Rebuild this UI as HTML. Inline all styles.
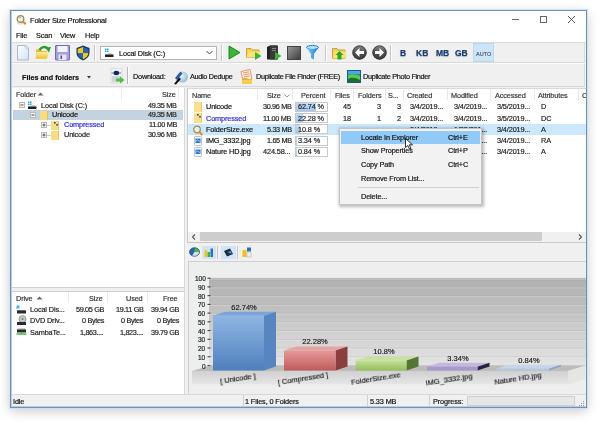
<!DOCTYPE html><html><head><meta charset="utf-8"><style>
html,body{margin:0;padding:0;width:600px;height:422px;overflow:hidden;background:#fff;position:relative}
.t{position:absolute;line-height:10px;white-space:nowrap;font-family:"Liberation Sans",sans-serif;will-change:transform;-webkit-text-stroke-width:0.18px}
.r{position:absolute;display:block}
</style></head><body>
<div class="r" style="left:10px;top:10px;width:577px;height:398px;background:#f0f0f0;box-shadow:0 0 0 1px rgba(200,225,248,0.8),0 3px 11px rgba(0,0,0,0.22);border:0"></div>
<div class="r" style="left:10px;top:10px;width:577px;height:398px;border:1px solid #7390b2;box-sizing:border-box;z-index:50;background:transparent"></div>
<div class="r" style="left:11px;top:11px;width:575px;height:396px;border:1px solid #b8cde4;border-top:0;border-right:0;box-sizing:border-box;z-index:50;background:transparent"></div>
<div class="r" style="left:11px;top:11px;width:575px;height:31px;background:#fff"></div>
<svg class="r" style="left:15px;top:14px" width="12" height="12" viewBox="0 0 12 12"><path d="M2 7 H8 V10.5 H2 Z" fill="#e8d8a8" opacity="0.8"/><circle cx="5.5" cy="5" r="3.3" fill="#eeeedd" stroke="#8c8c68" stroke-width="1.3"/><path d="M6 3.5 Q5 3 4 4" stroke="#9a9a80" stroke-width="0.7" fill="none"/><line x1="8" y1="7.5" x2="10.8" y2="10.3" stroke="#d08a40" stroke-width="2"/></svg>
<div class="t" style="left:30px;top:15.65px;font-size:7.5px;color:#111;font-weight:normal;letter-spacing:-0.2px;">Folder Size Professional</div>
<div class="r" style="left:512px;top:19px;width:7px;height:1px;background:#666"></div>
<div class="r" style="left:540px;top:16px;width:7px;height:7px;border:1px solid #666;box-sizing:border-box"></div>
<svg class="r" style="left:567px;top:15px" width="9" height="9" viewBox="0 0 9 9"><path d="M1 1 L8 8 M8 1 L1 8" stroke="#444" stroke-width="0.9"/></svg>
<div class="t" style="left:15.5px;top:31.32px;font-size:7.3px;color:#111;font-weight:normal;letter-spacing:-0.12px;">File</div>
<div class="t" style="left:36px;top:31.32px;font-size:7.3px;color:#111;font-weight:normal;letter-spacing:-0.12px;">Scan</div>
<div class="t" style="left:60px;top:31.32px;font-size:7.3px;color:#111;font-weight:normal;letter-spacing:-0.12px;">View</div>
<div class="t" style="left:84.5px;top:31.32px;font-size:7.3px;color:#111;font-weight:normal;letter-spacing:-0.12px;">Help</div>
<div class="r" style="left:11px;top:42px;width:575px;height:1px;background:#dadada"></div>
<div class="r" style="left:11px;top:43px;width:574px;height:20px;background:#f0f0f0"></div>
<div class="r" style="left:11px;top:62px;width:574px;height:1px;background:#d9d9d9"></div>
<div class="r" style="left:11px;top:63px;width:574px;height:1px;background:#fbfbfb"></div>
<div class="r" style="left:584px;top:43px;width:1px;height:20px;background:#dcdcdc"></div>
<svg class="r" style="left:16px;top:45px" width="13" height="16" viewBox="0 0 13 16"><defs><linearGradient id="gn" x1="0" y1="0" x2="1" y2="1"><stop offset="0" stop-color="#ffffff"/><stop offset="1" stop-color="#d4e2f6"/></linearGradient></defs><path d="M1.5 0.5 H8 Q12.5 0.5 12.5 5 V15 H1.5 Z" fill="url(#gn)" stroke="#a9b6d6"/><path d="M8 0.5 Q9.5 3.5 12.5 5" fill="none" stroke="#b8c4e0"/></svg>
<svg class="r" style="left:35px;top:45px" width="17" height="15" viewBox="0 0 17 15"><defs><linearGradient id="go" x1="0" y1="0" x2="0" y2="1"><stop offset="0" stop-color="#fdf0a0"/><stop offset="1" stop-color="#f0c030"/></linearGradient></defs><path d="M1 4.5 H5.5 L7 6 H12 V13.5 H1 Z" fill="#e8b830"/><path d="M1.5 7 H14 L12 13.5 H0.5 Z" fill="url(#go)"/><path d="M4.5 5 Q8 0 13 3.5" stroke="#22a030" stroke-width="2.4" fill="none"/><path d="M10.5 3 L16 1.8 L14 7.5 Z" fill="#22a030"/></svg>
<svg class="r" style="left:55px;top:45px" width="15" height="16" viewBox="0 0 15 16"><rect x="0.5" y="0.5" width="14" height="14.5" rx="0.5" fill="#a69fdc" stroke="#7068b8"/><rect x="2.5" y="1" width="10" height="6" fill="#f4f4fc"/><rect x="3.5" y="9.5" width="8" height="5.5" fill="#e4e2f4"/><rect x="5.5" y="10.5" width="1.5" height="3.5" fill="#5048a0"/></svg>
<svg class="r" style="left:76px;top:45px" width="14" height="16" viewBox="0 0 14 16"><path d="M7 0.5 L13.5 3 V8 Q13.5 13 7 15.5 Q0.5 13 0.5 8 V3 Z" fill="#17356a"/><path d="M7 2 L12.3 3.9 V8 H7 Z M7 8 V14.2 Q2 12.3 1.7 8 Z" fill="#2a62b0"/><path d="M7 2 V8 H1.7 V3.9 Z M7 8 H12.3 Q12 12.3 7 14.2 Z" fill="#f0c81e"/></svg>
<div class="r" style="left:94px;top:45px;width:1px;height:16px;background:#c8c8c8"></div>
<div class="r" style="left:95px;top:45px;width:1px;height:16px;background:#fff"></div>
<div class="r" style="left:100px;top:46px;width:117px;height:14px;background:#fff;border:1px solid #b4b4b4;box-sizing:border-box"></div>
<svg class="r" style="left:104px;top:48px" width="11" height="10" viewBox="0 0 11 10"><rect x="1" y="0.5" width="1.5" height="1.5" fill="#29a8e8"/><rect x="3" y="0.5" width="1.5" height="1.5" fill="#29a8e8"/><rect x="1" y="2.5" width="1.5" height="1.5" fill="#29a8e8"/><rect x="3" y="2.5" width="1.5" height="1.5" fill="#29a8e8"/><path d="M5 5.5 H8 L9.5 6.5 H1 Z" fill="#aaa"/><rect x="1" y="6.5" width="8.5" height="2.5" fill="#222"/></svg>
<div class="t" style="left:119px;top:48.82px;font-size:7.3px;color:#111;font-weight:normal;letter-spacing:-0.12px;">Local Disk (C:)</div>
<svg class="r" style="left:206px;top:50px" width="7" height="5" viewBox="0 0 7 5"><path d="M0.5 1 L3.5 4 L6.5 1" stroke="#444" fill="none" stroke-width="1"/></svg>
<div class="r" style="left:221px;top:45px;width:1px;height:16px;background:#c8c8c8"></div>
<div class="r" style="left:222px;top:45px;width:1px;height:16px;background:#fff"></div>
<svg class="r" style="left:228px;top:45px" width="13" height="15" viewBox="0 0 13 15"><path d="M1 1 L12 7.5 L1 14 Z" fill="#3cb43c" stroke="#1f8a1f"/></svg>
<svg class="r" style="left:246px;top:45px" width="16" height="15" viewBox="0 0 16 15"><path d="M0.5 3.5 H5 L6.5 5 H13 V12.5 H0.5 Z" fill="#f2cf55" stroke="#c9a430"/><path d="M2.5 6.5 H15 L13 12.5 H0.5 Z" fill="#fbe27a"/><path d="M9 7 L15.5 11 L9 15 Z" fill="#3cb43c"/></svg>
<svg class="r" style="left:266px;top:45px" width="16" height="15" viewBox="0 0 16 15"><path d="M1 2 L4 0.5 H11 V14.5 H1 Z" fill="#222"/><rect x="4" y="0.5" width="8" height="14" fill="#3a3a3a"/><rect x="6" y="3" width="4" height="1" fill="#888"/><rect x="6" y="5" width="4" height="1" fill="#888"/><path d="M9 7 L15.5 11 L9 15 Z" fill="#3cb43c"/></svg>
<svg class="r" style="left:287px;top:46px" width="14" height="14" viewBox="0 0 14 14"><defs><linearGradient id="gs" x1="0" y1="0" x2="1" y2="1"><stop offset="0" stop-color="#9a9a9a"/><stop offset="1" stop-color="#3c3c3c"/></linearGradient></defs><rect x="0.5" y="0.5" width="13" height="13" fill="url(#gs)" stroke="#444"/></svg>
<svg class="r" style="left:306px;top:45px" width="13" height="15" viewBox="0 0 13 15"><defs><linearGradient id="gf" x1="0" y1="0" x2="1" y2="0"><stop offset="0" stop-color="#7fd0ff"/><stop offset="1" stop-color="#1b78d0"/></linearGradient></defs><ellipse cx="6.5" cy="2.5" rx="6" ry="2" fill="#b8e4ff" stroke="#1b78d0"/><path d="M0.5 2.5 Q6.5 6 12.5 2.5 L8 9 V14.5 L5 13 V9 Z" fill="url(#gf)"/></svg>
<div class="r" style="left:325px;top:45px;width:1px;height:16px;background:#c8c8c8"></div>
<div class="r" style="left:326px;top:45px;width:1px;height:16px;background:#fff"></div>
<svg class="r" style="left:332px;top:45px" width="15" height="15" viewBox="0 0 15 15"><path d="M0.5 3.5 H5 L6.5 5 H13 V13.5 H0.5 Z" fill="#f2cf55" stroke="#c9a430"/><path d="M2.5 6.5 H14.5 L13 13.5 H0.5 Z" fill="#fbe27a"/><path d="M7.5 6 L11.5 10 H9.5 V14.5 H5.5 V10 H3.5 Z" fill="#2aa52a"/></svg>
<svg class="r" style="left:352.0px;top:45px" width="15" height="15" viewBox="0 0 15 15"><defs><linearGradient id="gb359" x1="0" y1="0" x2="0" y2="1"><stop offset="0" stop-color="#8a8a8a"/><stop offset="0.5" stop-color="#505050"/><stop offset="1" stop-color="#3a3a3a"/></linearGradient></defs><circle cx="7.5" cy="7.5" r="7.2" fill="url(#gb359)"/><circle cx="7.5" cy="7.5" r="6.6" fill="none" stroke="#2a2a2a" stroke-width="0.6"/><path d="M3 7.5 L7.5 3 V6 H12 V9 H7.5 V12 Z" fill="#fff"/></svg>
<svg class="r" style="left:372.0px;top:45px" width="15" height="15" viewBox="0 0 15 15"><defs><linearGradient id="gb379" x1="0" y1="0" x2="0" y2="1"><stop offset="0" stop-color="#8a8a8a"/><stop offset="0.5" stop-color="#505050"/><stop offset="1" stop-color="#3a3a3a"/></linearGradient></defs><circle cx="7.5" cy="7.5" r="7.2" fill="url(#gb379)"/><circle cx="7.5" cy="7.5" r="6.6" fill="none" stroke="#2a2a2a" stroke-width="0.6"/><path d="M12 7.5 L7.5 3 V6 H3 V9 H7.5 V12 Z" fill="#fff"/></svg>
<div class="r" style="left:390px;top:45px;width:1px;height:16px;background:#c8c8c8"></div>
<div class="r" style="left:391px;top:45px;width:1px;height:16px;background:#fff"></div>
<div class="t" style="left:400px;top:47.70px;font-size:8.5px;color:#1e3d6e;font-weight:bold;letter-spacing:0px;text-shadow:0 1px 1px rgba(30,60,110,0.35)">B</div>
<div class="t" style="left:416px;top:47.70px;font-size:8.5px;color:#1e3d6e;font-weight:bold;letter-spacing:0px;text-shadow:0 1px 1px rgba(30,60,110,0.35)">KB</div>
<div class="t" style="left:435.5px;top:47.70px;font-size:8.5px;color:#1e3d6e;font-weight:bold;letter-spacing:0px;text-shadow:0 1px 1px rgba(30,60,110,0.35)">MB</div>
<div class="t" style="left:455px;top:47.70px;font-size:8.5px;color:#1e3d6e;font-weight:bold;letter-spacing:0px;text-shadow:0 1px 1px rgba(30,60,110,0.35)">GB</div>
<div class="r" style="left:473px;top:43px;width:21px;height:19px;background:#cde4f7;border:1px solid #b8d8f2;box-sizing:border-box"></div>
<div class="t" style="left:475.5px;top:49.04px;font-size:5.5px;color:#4a5a70;font-weight:normal;letter-spacing:0px;">AUTO</div>
<div class="r" style="left:11px;top:64px;width:574px;height:23px;background:#f0f0f0"></div>
<div class="r" style="left:11px;top:86px;width:574px;height:1px;background:#d9d9d9"></div>
<div class="r" style="left:584px;top:64px;width:1px;height:22px;background:#dcdcdc"></div>
<div class="t" style="left:22px;top:72.56px;font-size:7.2px;color:#111;font-weight:bold;letter-spacing:0px;">Files and folders</div>
<svg class="r" style="left:87px;top:76px" width="4" height="3" viewBox="0 0 4 3"><path d="M0 0 H4 L2 2.5 Z" fill="#333"/></svg>
<svg class="r" style="left:110px;top:68px" width="15" height="16" viewBox="0 0 15 16"><rect x="1" y="0.5" width="11" height="14.5" fill="#f2f4f8" stroke="#d4d8e0" stroke-width="0.8"/><rect x="2" y="8" width="9" height="6" fill="#cdd4de"/><path d="M1.5 5 H3.5 M9 5 H11" stroke="#555" stroke-width="0.8"/><ellipse cx="6.3" cy="5" rx="2.8" ry="2.2" fill="#12286a"/><path d="M6 10.5 H10 V8.5 L14.5 12 L10 15.5 V13.5 H6 Z" fill="#52c040"/></svg>
<div class="r" style="left:127px;top:67px;width:1px;height:17px;background:#b8b8b8"></div>
<div class="r" style="left:128px;top:67px;width:1px;height:17px;background:#fff"></div>
<div class="t" style="left:133px;top:72.02px;font-size:7.3px;color:#111;font-weight:normal;letter-spacing:-0.22px;">Download:</div>
<svg class="r" style="left:173px;top:69px" width="15" height="16" viewBox="0 0 15 16"><defs><radialGradient id="ga" cx="0.4" cy="0.4" r="0.7"><stop offset="0" stop-color="#eef6fb"/><stop offset="1" stop-color="#8ab4d4"/></radialGradient></defs><circle cx="9.5" cy="8" r="5.5" fill="url(#ga)"/><path d="M2 9 L7.5 2.5 L9.5 4.5 L4 11 Z" fill="#2d5ca8"/><path d="M1 15 L6 8.5 L8 10 L3 15.5 Z" fill="#111"/></svg>
<div class="t" style="left:190px;top:72.02px;font-size:7.3px;color:#111;font-weight:normal;letter-spacing:-0.32px;">Audio Dedupe</div>
<svg class="r" style="left:239px;top:69px" width="15" height="16" viewBox="0 0 15 16"><path d="M2 2.5 L11 0.5 L13 10 L4 12 Z" fill="#fbf3ea" stroke="#e08040" stroke-width="0.8"/><path d="M4 4 L10 2.8 M4.5 6 L10.5 4.8 M5 8 L11 6.8" stroke="#e06a30" stroke-width="0.7"/><path d="M3 9 H8 L9 10 H13 V15 H3 Z" fill="#f3b030"/><path d="M3 11 H13 V15 H3 Z" fill="#f8cc50"/></svg>
<div class="t" style="left:256px;top:72.02px;font-size:7.3px;color:#111;font-weight:normal;letter-spacing:-0.33999999999999997px;">Duplicate File Finder (FREE)</div>
<svg class="r" style="left:347px;top:70px" width="14" height="13" viewBox="0 0 14 13"><rect x="0.5" y="0.5" width="13" height="12" fill="#2a9a4a" stroke="#1a5a8a"/><path d="M1 5 Q7 3 13 6 V12 H1 Z" fill="#5ac85a"/><path d="M1 9 Q6 6 13 10 V12 H1 Z" fill="#1d6e2a"/><rect x="1" y="1" width="12" height="3" fill="#4aa8e8"/></svg>
<div class="t" style="left:363px;top:72.02px;font-size:7.3px;color:#111;font-weight:normal;letter-spacing:-0.32px;">Duplicate Photo Finder</div>
<div class="r" style="left:11px;top:88px;width:173px;height:199px;background:#fff"></div>
<div class="r" style="left:11px;top:287px;width:174px;height:1px;background:#d0d0d0"></div>
<div class="r" style="left:11px;top:291px;width:173px;height:103px;background:#fff"></div>
<div class="r" style="left:11px;top:291px;width:174px;height:1px;background:#d0d0d0"></div>
<div class="r" style="left:184px;top:88px;width:1px;height:306px;background:#d8d8d8"></div>
<div class="r" style="left:187px;top:88px;width:399px;height:154px;background:#fff;border-left:1px solid #c8c8c8;border-top:1px solid #d8d8d8;box-sizing:border-box"></div>
<div class="r" style="left:187px;top:242px;width:399px;height:1px;background:#c8c8c8"></div>
<div class="t" style="left:16px;top:89.82px;font-size:7.3px;color:#333;font-weight:normal;letter-spacing:-0.12px;">Folder</div>
<svg class="r" style="left:37px;top:92px" width="7" height="4" viewBox="0 0 7 4"><path d="M0.5 3.5 L3.5 0.5 L6.5 3.5 Z" fill="#666"/></svg>
<div class="r" style="left:121px;top:89px;width:1px;height:11px;background:#eaeaea"></div>
<div class="r" style="left:178px;top:89px;width:1px;height:11px;background:#eaeaea"></div>
<div class="t" style="right:424.3px;top:89.82px;font-size:7.3px;color:#333;font-weight:normal;letter-spacing:-0.12px;">Size</div>
<div class="r" style="left:13px;top:110px;width:170px;height:10px;background:#c4d3e0"></div>
<svg class="r" style="left:19px;top:102px" width="6" height="6" viewBox="0 0 6 6"><rect x="0.5" y="0.5" width="5" height="5" fill="#f8f8f8" stroke="#b8b8b8"/><path d="M1.5 3 H4.5" stroke="#444"/></svg>
<svg class="r" style="left:27px;top:101px" width="10" height="8" viewBox="0 0 10 8"><rect x="1" y="0.5" width="1.5" height="1.5" fill="#29a8e8"/><rect x="3" y="0.5" width="1.5" height="1.5" fill="#29a8e8"/><rect x="1" y="2.5" width="1.5" height="1.5" fill="#29a8e8"/><rect x="3" y="2.5" width="1.5" height="1.5" fill="#29a8e8"/><path d="M5 4.5 H8 L9.5 5.5 H1 Z" fill="#aaa"/><rect x="1" y="5.5" width="8.5" height="2.5" fill="#222"/></svg>
<div class="t" style="left:41.3px;top:100.52px;font-size:7.3px;color:#222;font-weight:normal;letter-spacing:-0.12px;">Local Disk (C:)</div>
<div class="t" style="right:423.5px;top:100.52px;font-size:7.3px;color:#222;font-weight:normal;letter-spacing:-0.33999999999999997px;">49.35 MB</div>
<svg class="r" style="left:30px;top:112px" width="6" height="6" viewBox="0 0 6 6"><rect x="0.5" y="0.5" width="5" height="5" fill="#f8f8f8" stroke="#b8b8b8"/><path d="M1.5 3 H4.5" stroke="#444"/></svg>
<div class="r" style="left:40px;top:111px;width:8px;height:9px;background:#f8dc84;border-right:1px solid #e6c066;box-sizing:border-box"></div>
<div class="t" style="left:52.3px;top:110.32px;font-size:7.3px;color:#111;font-weight:normal;letter-spacing:-0.12px;">Unicode</div>
<div class="t" style="right:423.5px;top:110.32px;font-size:7.3px;color:#222;font-weight:normal;letter-spacing:-0.33999999999999997px;">49.35 MB</div>
<svg class="r" style="left:41px;top:122px" width="6" height="6" viewBox="0 0 6 6"><rect x="0.5" y="0.5" width="5" height="5" fill="#f8f8f8" stroke="#b8b8b8"/><path d="M1.5 3 H4.5" stroke="#444"/><path d="M3 1.5 V4.5" stroke="#555"/></svg>
<div class="r" style="left:51px;top:121px;width:8px;height:9px;background:#f8dc84;border-right:1px solid #e6c066;box-sizing:border-box"></div>
<svg class="r" style="left:53px;top:121px" width="6" height="6" viewBox="0 0 6 6"><rect x="1" y="1" width="1.6" height="1.6" fill="#1a4a90"/><rect x="3.2" y="3" width="1.6" height="1.6" fill="#1a4a90"/></svg>
<div class="t" style="left:64px;top:120.42px;font-size:7.3px;color:#2a2adf;font-weight:normal;letter-spacing:-0.12px;">Compressed</div>
<div class="t" style="right:423.5px;top:120.42px;font-size:7.3px;color:#222;font-weight:normal;letter-spacing:-0.33999999999999997px;">11.00 MB</div>
<svg class="r" style="left:41px;top:132px" width="6" height="6" viewBox="0 0 6 6"><rect x="0.5" y="0.5" width="5" height="5" fill="#f8f8f8" stroke="#b8b8b8"/><path d="M1.5 3 H4.5" stroke="#444"/><path d="M3 1.5 V4.5" stroke="#555"/></svg>
<div class="r" style="left:51px;top:131px;width:8px;height:9px;background:#f8dc84;border-right:1px solid #e6c066;box-sizing:border-box"></div>
<div class="t" style="left:64px;top:130.42px;font-size:7.3px;color:#222;font-weight:normal;letter-spacing:-0.12px;">Unicode</div>
<div class="t" style="right:423.5px;top:130.42px;font-size:7.3px;color:#222;font-weight:normal;letter-spacing:-0.33999999999999997px;">30.96 MB</div>
<div class="r" style="left:47px;top:125px;width:4px;height:1px;background:#d0d0d0"></div>
<div class="r" style="left:47px;top:135px;width:4px;height:1px;background:#d0d0d0"></div>
<div class="r" style="left:36px;top:108px;width:1px;height:2px;background:#d0d0d0"></div>
<div class="t" style="left:16.2px;top:293.82px;font-size:7.3px;color:#333;font-weight:normal;letter-spacing:-0.12px;">Drive</div>
<svg class="r" style="left:36px;top:296px" width="7" height="4" viewBox="0 0 7 4"><path d="M0.5 3.5 L3.5 0.5 L6.5 3.5 Z" fill="#666"/></svg>
<div class="r" style="left:67.5px;top:292px;width:1px;height:11px;background:#eaeaea"></div>
<div class="r" style="left:106.5px;top:292px;width:1px;height:11px;background:#eaeaea"></div>
<div class="r" style="left:146.5px;top:292px;width:1px;height:11px;background:#eaeaea"></div>
<div class="t" style="right:497.1px;top:293.82px;font-size:7.3px;color:#333;font-weight:normal;letter-spacing:-0.12px;">Size</div>
<div class="t" style="right:457.7px;top:293.82px;font-size:7.3px;color:#333;font-weight:normal;letter-spacing:-0.12px;">Used</div>
<div class="t" style="right:422px;top:293.82px;font-size:7.3px;color:#333;font-weight:normal;letter-spacing:-0.12px;">Free</div>
<div class="t" style="left:29.7px;top:305.02px;font-size:7.3px;color:#222;font-weight:normal;letter-spacing:-0.12px;">Local Dis...</div>
<div class="t" style="right:496.3px;top:305.02px;font-size:7.3px;color:#222;font-weight:normal;letter-spacing:-0.33999999999999997px;">59.05 GB</div>
<div class="t" style="right:456.9px;top:305.02px;font-size:7.3px;color:#222;font-weight:normal;letter-spacing:-0.33999999999999997px;">19.11 GB</div>
<div class="t" style="right:421.2px;top:305.02px;font-size:7.3px;color:#222;font-weight:normal;letter-spacing:-0.33999999999999997px;">39.94 GB</div>
<div class="t" style="left:29.7px;top:316.27px;font-size:7.3px;color:#222;font-weight:normal;letter-spacing:-0.12px;">DVD Driv...</div>
<div class="t" style="right:496.3px;top:316.27px;font-size:7.3px;color:#222;font-weight:normal;letter-spacing:-0.33999999999999997px;">0 Bytes</div>
<div class="t" style="right:456.9px;top:316.27px;font-size:7.3px;color:#222;font-weight:normal;letter-spacing:-0.33999999999999997px;">0 Bytes</div>
<div class="t" style="right:421.2px;top:316.27px;font-size:7.3px;color:#222;font-weight:normal;letter-spacing:-0.33999999999999997px;">0 Bytes</div>
<div class="t" style="left:29.7px;top:327.52px;font-size:7.3px;color:#222;font-weight:normal;letter-spacing:-0.12px;">SambaTe...</div>
<div class="t" style="right:496.3px;top:327.52px;font-size:7.3px;color:#222;font-weight:normal;letter-spacing:-0.33999999999999997px;">1,863....</div>
<div class="t" style="right:456.9px;top:327.52px;font-size:7.3px;color:#222;font-weight:normal;letter-spacing:-0.33999999999999997px;">1,823....</div>
<div class="t" style="right:421.2px;top:327.52px;font-size:7.3px;color:#222;font-weight:normal;letter-spacing:-0.33999999999999997px;">39.79 GB</div>
<svg class="r" style="left:16px;top:305px" width="11" height="9" viewBox="0 0 11 9"><rect x="0.5" y="0.5" width="3" height="3" fill="#3cb8f0"/><path d="M2 5 H9 L10 6 H1 Z" fill="#999"/><rect x="1" y="5.5" width="9" height="3" fill="#2a2a2a"/></svg>
<svg class="r" style="left:16px;top:315px" width="11" height="11" viewBox="0 0 11 11"><circle cx="6.5" cy="4" r="3.5" fill="#c8c8c8" stroke="#888" stroke-width="0.8"/><circle cx="6.5" cy="4" r="1" fill="#777"/><path d="M1 7 H10 V10 H1 Z" fill="#2a2a2a"/></svg>
<svg class="r" style="left:16px;top:327px" width="11" height="9" viewBox="0 0 11 9"><path d="M2 1.5 H9 L10 2.5 H1 Z" fill="#999"/><rect x="1" y="2.5" width="9" height="3" fill="#2a2a2a"/><path d="M0.5 7 H10.5" stroke="#3cb43c" stroke-width="1.4"/><path d="M5.5 5.5 V7" stroke="#3cb43c" stroke-width="1"/></svg>
<div class="t" style="left:192px;top:91.32px;font-size:7.3px;color:#333;font-weight:normal;letter-spacing:-0.12px;">Name</div>
<div class="t" style="right:319.5px;top:91.32px;font-size:7.3px;color:#333;font-weight:normal;letter-spacing:-0.12px;">Size</div>
<div class="t" style="left:301px;top:91.32px;font-size:7.3px;color:#333;font-weight:normal;letter-spacing:-0.12px;">Percent</div>
<div class="t" style="right:250.5px;top:91.32px;font-size:7.3px;color:#333;font-weight:normal;letter-spacing:-0.12px;">Files</div>
<div class="t" style="right:219px;top:91.32px;font-size:7.3px;color:#333;font-weight:normal;letter-spacing:-0.12px;">Folders</div>
<div class="t" style="left:388px;top:91.32px;font-size:7.3px;color:#333;font-weight:normal;letter-spacing:-0.12px;">S...</div>
<div class="t" style="left:407px;top:91.32px;font-size:7.3px;color:#333;font-weight:normal;letter-spacing:-0.12px;">Created</div>
<div class="t" style="left:450.8px;top:91.32px;font-size:7.3px;color:#333;font-weight:normal;letter-spacing:-0.12px;">Modified</div>
<div class="t" style="left:494.7px;top:91.32px;font-size:7.3px;color:#333;font-weight:normal;letter-spacing:-0.12px;">Accessed</div>
<div class="t" style="left:538.3px;top:91.32px;font-size:7.3px;color:#333;font-weight:normal;letter-spacing:-0.12px;">Attributes</div>
<div class="t" style="left:581.5px;top:91.32px;font-size:7.3px;color:#333;font-weight:normal;letter-spacing:-0.12px;">C</div>
<svg class="r" style="left:284px;top:94px" width="6" height="4" viewBox="0 0 6 4"><path d="M0.5 0.5 L3 3 L5.5 0.5" stroke="#999" fill="none"/></svg>
<div class="r" style="left:257px;top:89px;width:1px;height:11px;background:#e8e8e8"></div>
<div class="r" style="left:292px;top:89px;width:1px;height:11px;background:#e8e8e8"></div>
<div class="r" style="left:329.5px;top:89px;width:1px;height:11px;background:#e8e8e8"></div>
<div class="r" style="left:353px;top:89px;width:1px;height:11px;background:#e8e8e8"></div>
<div class="r" style="left:384.5px;top:89px;width:1px;height:11px;background:#e8e8e8"></div>
<div class="r" style="left:403.3px;top:89px;width:1px;height:11px;background:#e8e8e8"></div>
<div class="r" style="left:446.7px;top:89px;width:1px;height:11px;background:#e8e8e8"></div>
<div class="r" style="left:490px;top:89px;width:1px;height:11px;background:#e8e8e8"></div>
<div class="r" style="left:534px;top:89px;width:1px;height:11px;background:#e8e8e8"></div>
<div class="r" style="left:578px;top:89px;width:1px;height:11px;background:#e8e8e8"></div>
<div class="r" style="left:188px;top:124px;width:398px;height:11px;background:#cce8ff"></div>
<div class="r" style="left:194px;top:102px;width:8px;height:10px;background:#f9e08e;border-right:1px solid #ecc870;box-sizing:border-box"></div>
<div class="t" style="left:206px;top:102.42px;font-size:7.3px;color:#111;font-weight:normal;letter-spacing:-0.12px;">Unicode</div>
<div class="t" style="right:308.7px;top:102.42px;font-size:7.3px;color:#222;font-weight:normal;letter-spacing:-0.33999999999999997px;">30.96 MB</div>
<div class="r" style="left:295px;top:102px;width:33px;height:10px;background:#fff;border:1px solid #c8c8c8;box-sizing:border-box"></div>
<div class="r" style="left:296px;top:103px;width:20px;height:8px;background:linear-gradient(#c0dcf6,#a4c8ee)"></div>
<div class="t" style="left:298px;top:102.42px;font-size:7.3px;color:#222;font-weight:normal;letter-spacing:-0.12px;">62.74 %</div>
<div class="t" style="right:249.5px;top:102.42px;font-size:7.3px;color:#222;font-weight:normal;letter-spacing:-0.12px;">45</div>
<div class="t" style="right:219px;top:102.42px;font-size:7.3px;color:#222;font-weight:normal;letter-spacing:-0.12px;">3</div>
<div class="t" style="right:199.2px;top:102.42px;font-size:7.3px;color:#222;font-weight:normal;letter-spacing:-0.12px;">3</div>
<div class="t" style="left:410px;top:102.42px;font-size:7.3px;color:#222;font-weight:normal;letter-spacing:-0.12px;">3/4/2019...</div>
<div class="t" style="left:453.5px;top:102.42px;font-size:7.3px;color:#222;font-weight:normal;letter-spacing:-0.12px;">3/4/2019...</div>
<div class="t" style="left:497.4px;top:102.42px;font-size:7.3px;color:#222;font-weight:normal;letter-spacing:-0.12px;">3/5/2019...</div>
<div class="t" style="left:540.5px;top:102.42px;font-size:7.3px;color:#222;font-weight:normal;letter-spacing:-0.12px;">D</div>
<div class="r" style="left:194px;top:113px;width:8px;height:10px;background:#f9e08e;border-right:1px solid #ecc870;box-sizing:border-box"></div>
<svg class="r" style="left:196px;top:113px" width="6" height="6" viewBox="0 0 6 6"><rect x="1" y="1" width="1.6" height="1.6" fill="#1a4a90"/><rect x="3.2" y="3" width="1.6" height="1.6" fill="#1a4a90"/></svg>
<div class="t" style="left:206px;top:113.57px;font-size:7.3px;color:#2a2adf;font-weight:normal;letter-spacing:-0.12px;">Compressed</div>
<div class="t" style="right:308.7px;top:113.57px;font-size:7.3px;color:#222;font-weight:normal;letter-spacing:-0.33999999999999997px;">11.00 MB</div>
<div class="r" style="left:295px;top:113px;width:33px;height:10px;background:#fff;border:1px solid #c8c8c8;box-sizing:border-box"></div>
<div class="r" style="left:296px;top:114px;width:7px;height:8px;background:linear-gradient(#c0dcf6,#a4c8ee)"></div>
<div class="t" style="left:298px;top:113.57px;font-size:7.3px;color:#222;font-weight:normal;letter-spacing:-0.12px;">22.28 %</div>
<div class="t" style="right:249.5px;top:113.57px;font-size:7.3px;color:#222;font-weight:normal;letter-spacing:-0.12px;">18</div>
<div class="t" style="right:219px;top:113.57px;font-size:7.3px;color:#222;font-weight:normal;letter-spacing:-0.12px;">1</div>
<div class="t" style="right:199.2px;top:113.57px;font-size:7.3px;color:#222;font-weight:normal;letter-spacing:-0.12px;">2</div>
<div class="t" style="left:410px;top:113.57px;font-size:7.3px;color:#222;font-weight:normal;letter-spacing:-0.12px;">3/4/2019...</div>
<div class="t" style="left:453.5px;top:113.57px;font-size:7.3px;color:#222;font-weight:normal;letter-spacing:-0.12px;">3/4/2019...</div>
<div class="t" style="left:497.4px;top:113.57px;font-size:7.3px;color:#222;font-weight:normal;letter-spacing:-0.12px;">3/5/2019...</div>
<div class="t" style="left:540.5px;top:113.57px;font-size:7.3px;color:#222;font-weight:normal;letter-spacing:-0.12px;">DC</div>
<svg class="r" style="left:192px;top:125px" width="11" height="11" viewBox="0 0 11 11"><path d="M1.5 6 H7.5 V10 H1.5 Z" fill="#e8d8a8" opacity="0.8"/><circle cx="5" cy="4.5" r="3.3" fill="#eeeedd" stroke="#8c8c68" stroke-width="1.2"/><line x1="7.5" y1="7" x2="10.3" y2="10" stroke="#d08a40" stroke-width="1.9"/></svg>
<div class="t" style="left:206px;top:124.72px;font-size:7.3px;color:#111;font-weight:normal;letter-spacing:-0.12px;">FolderSize.exe</div>
<div class="t" style="right:308.7px;top:124.72px;font-size:7.3px;color:#222;font-weight:normal;letter-spacing:-0.33999999999999997px;">5.33 MB</div>
<div class="r" style="left:295px;top:124px;width:33px;height:10px;background:#fff;border:1px solid #c8c8c8;box-sizing:border-box"></div>
<div class="r" style="left:296px;top:125px;width:4px;height:8px;background:linear-gradient(#c0dcf6,#a4c8ee)"></div>
<div class="t" style="left:298px;top:124.72px;font-size:7.3px;color:#222;font-weight:normal;letter-spacing:-0.12px;">10.8 %</div>
<div class="t" style="left:410px;top:124.72px;font-size:7.3px;color:#222;font-weight:normal;letter-spacing:-0.12px;">3/4/2019...</div>
<div class="t" style="left:453.5px;top:124.72px;font-size:7.3px;color:#222;font-weight:normal;letter-spacing:-0.12px;">1/22/201...</div>
<div class="t" style="left:497.4px;top:124.72px;font-size:7.3px;color:#222;font-weight:normal;letter-spacing:-0.12px;">3/4/2019...</div>
<div class="t" style="left:540.5px;top:124.72px;font-size:7.3px;color:#222;font-weight:normal;letter-spacing:-0.12px;">A</div>
<svg class="r" style="left:194px;top:136px" width="8" height="10" viewBox="0 0 8 10"><rect x="0.5" y="0.5" width="7" height="9" rx="0.8" fill="#f6f8fc" stroke="#b4c0d4"/><rect x="1.5" y="2.5" width="5" height="4.5" fill="#2a7ad0"/><path d="M1.5 5.5 L3.5 4 L6.5 6" stroke="#bfe0ff" stroke-width="0.8" fill="none"/></svg>
<div class="t" style="left:206px;top:135.87px;font-size:7.3px;color:#111;font-weight:normal;letter-spacing:-0.12px;">IMG_3332.jpg</div>
<div class="t" style="right:308.7px;top:135.87px;font-size:7.3px;color:#222;font-weight:normal;letter-spacing:-0.33999999999999997px;">1.65 MB</div>
<div class="r" style="left:295px;top:136px;width:33px;height:10px;background:#fff;border:1px solid #c8c8c8;box-sizing:border-box"></div>
<div class="r" style="left:296px;top:137px;width:1px;height:8px;background:linear-gradient(#c0dcf6,#a4c8ee)"></div>
<div class="t" style="left:298px;top:135.87px;font-size:7.3px;color:#222;font-weight:normal;letter-spacing:-0.12px;">3.34 %</div>
<div class="t" style="left:410px;top:135.87px;font-size:7.3px;color:#222;font-weight:normal;letter-spacing:-0.12px;">3/4/2019...</div>
<div class="t" style="left:453.5px;top:135.87px;font-size:7.3px;color:#222;font-weight:normal;letter-spacing:-0.12px;">3/4/2019...</div>
<div class="t" style="left:497.4px;top:135.87px;font-size:7.3px;color:#222;font-weight:normal;letter-spacing:-0.12px;">3/4/2019...</div>
<div class="t" style="left:540.5px;top:135.87px;font-size:7.3px;color:#222;font-weight:normal;letter-spacing:-0.12px;">RA</div>
<svg class="r" style="left:194px;top:147px" width="8" height="10" viewBox="0 0 8 10"><rect x="0.5" y="0.5" width="7" height="9" rx="0.8" fill="#f6f8fc" stroke="#b4c0d4"/><rect x="1.5" y="2.5" width="5" height="4.5" fill="#2a7ad0"/><path d="M1.5 5.5 L3.5 4 L6.5 6" stroke="#bfe0ff" stroke-width="0.8" fill="none"/></svg>
<div class="t" style="left:206px;top:147.02px;font-size:7.3px;color:#111;font-weight:normal;letter-spacing:-0.12px;">Nature HD.jpg</div>
<div class="t" style="right:309.5px;top:147.02px;font-size:7.3px;color:#222;font-weight:normal;letter-spacing:-0.12px;">424.58...</div>
<div class="r" style="left:295px;top:147px;width:33px;height:10px;background:#fff;border:1px solid #c8c8c8;box-sizing:border-box"></div>
<div class="r" style="left:296px;top:148px;width:1px;height:8px;background:linear-gradient(#c0dcf6,#a4c8ee)"></div>
<div class="t" style="left:298px;top:147.02px;font-size:7.3px;color:#222;font-weight:normal;letter-spacing:-0.12px;">0.84 %</div>
<div class="t" style="left:410px;top:147.02px;font-size:7.3px;color:#222;font-weight:normal;letter-spacing:-0.12px;">3/4/2019...</div>
<div class="t" style="left:453.5px;top:147.02px;font-size:7.3px;color:#222;font-weight:normal;letter-spacing:-0.12px;">3/4/2019...</div>
<div class="t" style="left:497.4px;top:147.02px;font-size:7.3px;color:#222;font-weight:normal;letter-spacing:-0.12px;">3/4/2019...</div>
<div class="t" style="left:540.5px;top:147.02px;font-size:7.3px;color:#222;font-weight:normal;letter-spacing:-0.12px;">A</div>
<div class="r" style="left:188px;top:232px;width:398px;height:10px;background:#f0f0f0"></div>
<div class="r" style="left:200px;top:232px;width:342px;height:9px;background:#cdcdcd"></div>
<svg class="r" style="left:191px;top:233px" width="6" height="8" viewBox="0 0 6 8"><path d="M4 1.5 L1.5 4 L4 6.5" stroke="#555" stroke-width="1.1" fill="none"/></svg>
<svg class="r" style="left:577px;top:233px" width="6" height="8" viewBox="0 0 6 8"><path d="M2 1.5 L4.5 4 L2 6.5" stroke="#555" stroke-width="1.1" fill="none"/></svg>
<div class="r" style="left:339px;top:128px;width:143px;height:77px;background:#f2f2f2;border:1px solid #c4c4c4;box-sizing:border-box;box-shadow:1px 1px 3px 1px rgba(0,0,0,0.28)"></div>
<div class="r" style="left:341px;top:131px;width:139px;height:13px;background:#91c9f7"></div>
<div class="t" style="left:360.5px;top:132.62px;font-size:7.3px;color:#111;font-weight:normal;letter-spacing:-0.12px;">Locate In Explorer</div>
<div class="t" style="left:448px;top:132.62px;font-size:7.3px;color:#111;font-weight:normal;letter-spacing:-0.12px;">Ctrl+E</div>
<div class="t" style="left:360.5px;top:146.32px;font-size:7.3px;color:#111;font-weight:normal;letter-spacing:-0.12px;">Show Properties</div>
<div class="t" style="left:448px;top:146.32px;font-size:7.3px;color:#111;font-weight:normal;letter-spacing:-0.12px;">Ctrl+P</div>
<div class="t" style="left:360.5px;top:160.02px;font-size:7.3px;color:#111;font-weight:normal;letter-spacing:-0.12px;">Copy Path</div>
<div class="t" style="left:448px;top:160.02px;font-size:7.3px;color:#111;font-weight:normal;letter-spacing:-0.12px;">Ctrl+C</div>
<div class="t" style="left:360.5px;top:173.72px;font-size:7.3px;color:#111;font-weight:normal;letter-spacing:-0.12px;">Remove From List...</div>
<div class="r" style="left:358px;top:187px;width:121px;height:1px;background:#d0d0d0"></div>
<div class="t" style="left:360.5px;top:192.22px;font-size:7.3px;color:#111;font-weight:normal;letter-spacing:-0.12px;">Delete...</div>
<svg class="r" style="left:405px;top:138px" width="9" height="12" viewBox="0 0 9 12"><path d="M0.5 0.5 V9.5 L2.8 7.5 L4.5 11 L6 10.3 L4.3 6.8 H7.5 Z" fill="#fff" stroke="#000" stroke-width="0.8"/></svg>
<div class="r" style="left:188px;top:243px;width:398px;height:17px;background:#f0f0f0"></div>
<svg class="r" style="left:189px;top:247px" width="11" height="10" viewBox="0 0 11 10"><ellipse cx="5.5" cy="5" rx="5" ry="4.3" fill="#2a62b8"/><path d="M5.5 5 L5.5 0.7 A5 4.3 0 0 1 10.5 5 Z" fill="#4cb848"/><path d="M5.5 5 L10.5 5 A5 4.3 0 0 1 3 8.7 Z" fill="#d8dde4"/><ellipse cx="5.5" cy="5" rx="5" ry="4.3" fill="none" stroke="#1a3a70" stroke-width="0.6"/></svg>
<div class="r" style="left:202px;top:246px;width:14px;height:13px;background:#d0e4f6"></div>
<svg class="r" style="left:204px;top:248px" width="10" height="9" viewBox="0 0 10 9"><rect x="0.5" y="2" width="2.5" height="7" fill="#f2c21b"/><rect x="3.5" y="4" width="2.5" height="5" fill="#3cb43c"/><rect x="6.5" y="0.5" width="2.5" height="8.5" fill="#2a6fc8"/></svg>
<div class="r" style="left:217px;top:246px;width:1px;height:13px;background:#c8c8c8"></div>
<div class="r" style="left:221px;top:246px;width:15px;height:13px;background:#d0e4f6"></div>
<svg class="r" style="left:223px;top:248px" width="11" height="9" viewBox="0 0 11 9"><path d="M1 3 L7 0.5 L10 6 L4 8.5 Z" fill="#1a2a3a"/><path d="M4 4 L8 3 L8.5 6 Z" fill="#3aa0e0"/></svg>
<div class="r" style="left:237px;top:246px;width:1px;height:13px;background:#c8c8c8"></div>
<svg class="r" style="left:242px;top:247px" width="10" height="11" viewBox="0 0 10 11"><rect x="0.5" y="3" width="4" height="7" fill="#f2c21b"/><rect x="5" y="0.5" width="4" height="4" fill="#2a6fc8"/><rect x="5" y="5" width="4" height="5" fill="#eee" stroke="#aaa" stroke-width="0.5"/></svg>
<div class="r" style="left:188px;top:261px;width:398px;height:133px;background:#edeeee;border-top:1px solid #d0d0d0;border-left:1px solid #d0d0d0;box-sizing:border-box"></div>
<svg class="r" style="left:188px;top:261px" width="398" height="133" viewBox="188 261 398 133"><defs><linearGradient id="wall" x1="0" y1="0" x2="0" y2="1"><stop offset="0" stop-color="#afafaf"/><stop offset="0.5" stop-color="#c8c8c8"/><stop offset="1" stop-color="#e4e4e4"/></linearGradient><linearGradient id="ffront" x1="0" y1="0" x2="0" y2="1"><stop offset="0" stop-color="#d0d0d0"/><stop offset="1" stop-color="#e6e6e6"/></linearGradient><linearGradient id="bblue" x1="0" y1="0" x2="0" y2="1"><stop offset="0" stop-color="#8fb6e3"/><stop offset="1" stop-color="#4f7fbd"/></linearGradient><linearGradient id="bred" x1="0" y1="0" x2="0" y2="1"><stop offset="0" stop-color="#e49a9a"/><stop offset="1" stop-color="#c05a5a"/></linearGradient><linearGradient id="bgreen" x1="0" y1="0" x2="0" y2="1"><stop offset="0" stop-color="#c5e09a"/><stop offset="1" stop-color="#94be5c"/></linearGradient></defs><rect x="209" y="278.2" width="377" height="87.4" fill="url(#wall)"/><line x1="209" y1="278.20" x2="586" y2="278.20" stroke="#9a9a9a" stroke-width="1" opacity="0.24"/><line x1="209" y1="279.20" x2="586" y2="279.20" stroke="#ffffff" stroke-width="1" opacity="0.25"/><line x1="207.5" y1="278.20" x2="210.5" y2="278.20" stroke="#333" stroke-width="1"/><line x1="209" y1="286.93" x2="586" y2="286.93" stroke="#9a9a9a" stroke-width="1" opacity="0.24"/><line x1="209" y1="287.93" x2="586" y2="287.93" stroke="#ffffff" stroke-width="1" opacity="0.25"/><line x1="207.5" y1="286.93" x2="210.5" y2="286.93" stroke="#333" stroke-width="1"/><line x1="209" y1="295.66" x2="586" y2="295.66" stroke="#9a9a9a" stroke-width="1" opacity="0.24"/><line x1="209" y1="296.66" x2="586" y2="296.66" stroke="#ffffff" stroke-width="1" opacity="0.25"/><line x1="207.5" y1="295.66" x2="210.5" y2="295.66" stroke="#333" stroke-width="1"/><line x1="209" y1="304.39" x2="586" y2="304.39" stroke="#9a9a9a" stroke-width="1" opacity="0.24"/><line x1="209" y1="305.39" x2="586" y2="305.39" stroke="#ffffff" stroke-width="1" opacity="0.25"/><line x1="207.5" y1="304.39" x2="210.5" y2="304.39" stroke="#333" stroke-width="1"/><line x1="209" y1="313.12" x2="586" y2="313.12" stroke="#9a9a9a" stroke-width="1" opacity="0.24"/><line x1="209" y1="314.12" x2="586" y2="314.12" stroke="#ffffff" stroke-width="1" opacity="0.25"/><line x1="207.5" y1="313.12" x2="210.5" y2="313.12" stroke="#333" stroke-width="1"/><line x1="209" y1="321.85" x2="586" y2="321.85" stroke="#9a9a9a" stroke-width="1" opacity="0.24"/><line x1="209" y1="322.85" x2="586" y2="322.85" stroke="#ffffff" stroke-width="1" opacity="0.25"/><line x1="207.5" y1="321.85" x2="210.5" y2="321.85" stroke="#333" stroke-width="1"/><line x1="209" y1="330.58" x2="586" y2="330.58" stroke="#9a9a9a" stroke-width="1" opacity="0.24"/><line x1="209" y1="331.58" x2="586" y2="331.58" stroke="#ffffff" stroke-width="1" opacity="0.25"/><line x1="207.5" y1="330.58" x2="210.5" y2="330.58" stroke="#333" stroke-width="1"/><line x1="209" y1="339.31" x2="586" y2="339.31" stroke="#9a9a9a" stroke-width="1" opacity="0.24"/><line x1="209" y1="340.31" x2="586" y2="340.31" stroke="#ffffff" stroke-width="1" opacity="0.25"/><line x1="207.5" y1="339.31" x2="210.5" y2="339.31" stroke="#333" stroke-width="1"/><line x1="209" y1="348.04" x2="586" y2="348.04" stroke="#9a9a9a" stroke-width="1" opacity="0.24"/><line x1="209" y1="349.04" x2="586" y2="349.04" stroke="#ffffff" stroke-width="1" opacity="0.25"/><line x1="207.5" y1="348.04" x2="210.5" y2="348.04" stroke="#333" stroke-width="1"/><line x1="209" y1="356.77" x2="586" y2="356.77" stroke="#9a9a9a" stroke-width="1" opacity="0.24"/><line x1="209" y1="357.77" x2="586" y2="357.77" stroke="#ffffff" stroke-width="1" opacity="0.25"/><line x1="207.5" y1="356.77" x2="210.5" y2="356.77" stroke="#333" stroke-width="1"/><line x1="209" y1="365.50" x2="586" y2="365.50" stroke="#9a9a9a" stroke-width="1" opacity="0.24"/><line x1="209" y1="366.50" x2="586" y2="366.50" stroke="#ffffff" stroke-width="1" opacity="0.25"/><line x1="207.5" y1="365.50" x2="210.5" y2="365.50" stroke="#333" stroke-width="1"/><polygon points="192,371 210,365.5 586,365.5 568,371" fill="#bcbcbc"/><rect x="192" y="371" width="376" height="13.5" fill="url(#ffront)"/><polygon points="568,371 586,365.5 586,379 568,384.5" fill="#e3e7df"/><polygon points="213,315.7 225,311.7 276,311.7 264,315.7" fill="#7aa5d8"/><polygon points="264,315.7 276,311.7 276,366.5 264,370.5" fill="#5785c0"/><rect x="213" y="315.7" width="51" height="54.80000000000001" fill="url(#bblue)"/><polygon points="284,350.5 296,346.5 347.5,346.5 335.5,350.5" fill="#e4a4a4"/><polygon points="335.5,350.5 347.5,346.5 347.5,366.5 335.5,370.5" fill="#8a3e3e"/><rect x="284" y="350.5" width="51.5" height="20.0" fill="url(#bred)"/><polygon points="355.5,360.5 367.5,356.5 418.5,356.5 406.5,360.5" fill="#c8e0a0"/><polygon points="406.5,360.5 418.5,356.5 418.5,366.5 406.5,370.5" fill="#557535"/><rect x="355.5" y="360.5" width="51.0" height="10.0" fill="url(#bgreen)"/><polygon points="427,366.7 439,362.7 489.5,362.7 477.5,366.7" fill="#c4b8e0"/><polygon points="477.5,366.7 489.5,362.7 489.5,366.5 477.5,370.5" fill="#2a2040"/><rect x="427" y="366.7" width="50.5" height="3.8000000000000114" fill="#a898cc"/><polygon points="496,368.7 508,364.7 561,364.7 549,368.7" fill="#c8d4e8"/><polygon points="549,368.7 561,364.7 561,366.5 549,370.5" fill="#8ea4c4"/><rect x="496" y="368.7" width="53" height="1.8000000000000114" fill="#b8c8e0"/></svg>
<div class="t" style="right:394.5px;top:274.30px;font-size:6.5px;color:#222;font-weight:normal;letter-spacing:0px;">100</div>
<div class="t" style="right:394.5px;top:283.03px;font-size:6.5px;color:#222;font-weight:normal;letter-spacing:0px;">90</div>
<div class="t" style="right:394.5px;top:291.76px;font-size:6.5px;color:#222;font-weight:normal;letter-spacing:0px;">80</div>
<div class="t" style="right:394.5px;top:300.49px;font-size:6.5px;color:#222;font-weight:normal;letter-spacing:0px;">70</div>
<div class="t" style="right:394.5px;top:309.22px;font-size:6.5px;color:#222;font-weight:normal;letter-spacing:0px;">60</div>
<div class="t" style="right:394.5px;top:317.95px;font-size:6.5px;color:#222;font-weight:normal;letter-spacing:0px;">50</div>
<div class="t" style="right:394.5px;top:326.68px;font-size:6.5px;color:#222;font-weight:normal;letter-spacing:0px;">40</div>
<div class="t" style="right:394.5px;top:335.41px;font-size:6.5px;color:#222;font-weight:normal;letter-spacing:0px;">30</div>
<div class="t" style="right:394.5px;top:344.14px;font-size:6.5px;color:#222;font-weight:normal;letter-spacing:0px;">20</div>
<div class="t" style="right:394.5px;top:352.87px;font-size:6.5px;color:#222;font-weight:normal;letter-spacing:0px;">10</div>
<div class="t" style="right:394.5px;top:361.60px;font-size:6.5px;color:#222;font-weight:normal;letter-spacing:0px;">0</div>
<div class="t" style="left:144.3px;width:200px;text-align:center;top:302.85px;font-size:7.5px;color:#222;font-weight:normal;letter-spacing:0px;">62.74%</div>
<div class="t" style="left:215px;width:200px;text-align:center;top:337.35px;font-size:7.5px;color:#222;font-weight:normal;letter-spacing:0px;">22.28%</div>
<div class="t" style="left:283.7px;width:200px;text-align:center;top:347.35px;font-size:7.5px;color:#222;font-weight:normal;letter-spacing:0px;">10.8%</div>
<div class="t" style="left:358px;width:200px;text-align:center;top:353.55px;font-size:7.5px;color:#222;font-weight:normal;letter-spacing:0px;">3.34%</div>
<div class="t" style="left:429.29999999999995px;width:200px;text-align:center;top:356.15px;font-size:7.5px;color:#222;font-weight:normal;letter-spacing:0px;">0.84%</div>
<div class="t" style="left:178px;width:120px;top:373.5px;text-align:center;font-size:7.5px;color:#222;transform:rotate(-9deg)">[ Unicode ]</div>
<div class="t" style="left:242.5px;width:120px;top:373.5px;text-align:center;font-size:7.5px;color:#222;transform:rotate(-9deg)">[ Compressed ]</div>
<div class="t" style="left:316px;width:120px;top:373.5px;text-align:center;font-size:7.5px;color:#222;transform:rotate(-9deg)">FolderSize.exe</div>
<div class="t" style="left:389px;width:120px;top:374.5px;text-align:center;font-size:7.5px;color:#222;transform:rotate(-9deg)">IMG_3332.jpg</div>
<div class="t" style="left:458px;width:120px;top:374px;text-align:center;font-size:7.5px;color:#222;transform:rotate(-9deg)">Nature HD.jpg</div>
<div class="r" style="left:11px;top:394px;width:575px;height:13px;background:#f0f0f0"></div>
<div class="r" style="left:11px;top:394px;width:575px;height:1px;background:#d8d8d8"></div>
<div class="t" style="left:13px;top:397.22px;font-size:7.3px;color:#111;font-weight:normal;letter-spacing:-0.12px;">Idle</div>
<div class="r" style="left:243px;top:395px;width:1px;height:12px;background:#d0d0d0"></div>
<div class="r" style="left:366.7px;top:395px;width:1px;height:12px;background:#d0d0d0"></div>
<div class="r" style="left:428.5px;top:395px;width:1px;height:12px;background:#d0d0d0"></div>
<div class="t" style="left:245.3px;top:397.22px;font-size:7.3px;color:#111;font-weight:normal;letter-spacing:-0.12px;">1 Files, 0 Folders</div>
<div class="t" style="left:370px;top:397.22px;font-size:7.3px;color:#111;font-weight:normal;letter-spacing:-0.12px;">5.33 MB</div>
<div class="t" style="left:432.7px;top:397.22px;font-size:7.3px;color:#111;font-weight:normal;letter-spacing:-0.12px;">Progress:</div>
<div class="r" style="left:467px;top:396px;width:108px;height:10px;background:#e6e6e6;border:1px solid #cfcfcf;box-sizing:border-box"></div>
<svg class="r" style="left:578px;top:400px" width="7" height="6" viewBox="0 0 7 6"><rect x="5" y="1" width="1" height="1" fill="#999"/><rect x="3" y="3" width="1" height="1" fill="#999"/><rect x="5" y="3" width="1" height="1" fill="#999"/><rect x="1" y="5" width="1" height="1" fill="#999"/><rect x="3" y="5" width="1" height="1" fill="#999"/><rect x="5" y="5" width="1" height="1" fill="#999"/></svg>
</body></html>
